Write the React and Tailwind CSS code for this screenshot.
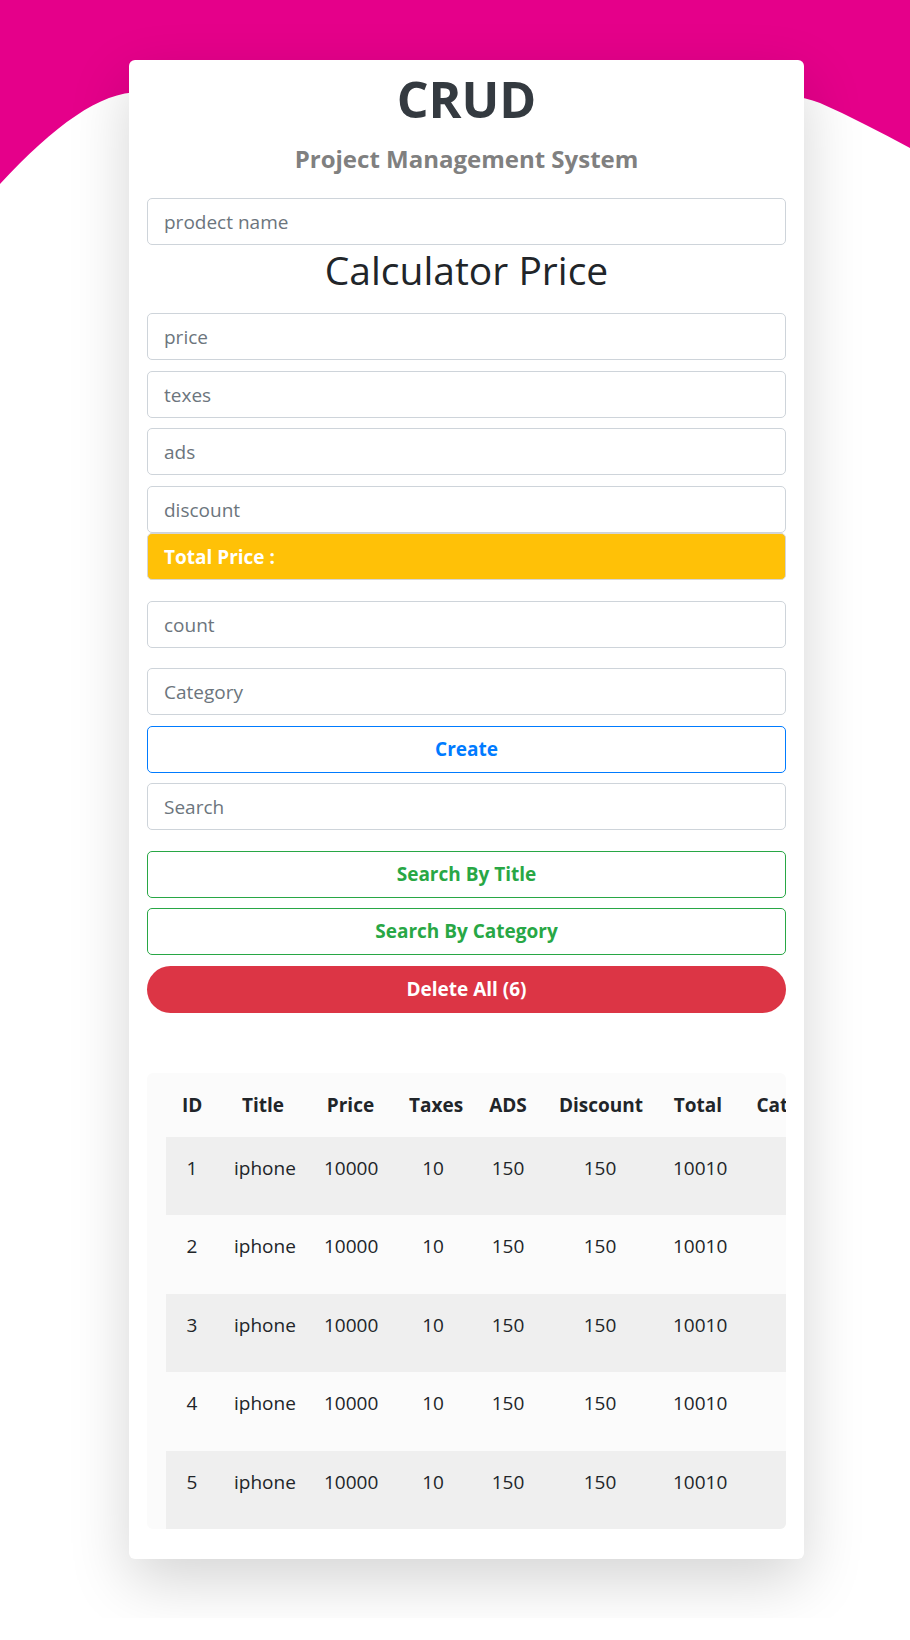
import React from "react";

const rows = [1, 2, 3, 4, 5].map((id) => ({
  id,
  title: "iphone",
  price: 10000,
  taxes: 10,
  ads: 150,
  discount: 150,
  total: 10010,
  category: "",
}));

const inputCls =
  "block w-full h-[47px] rounded-[5px] border border-[#ced4da] bg-white px-4 text-[19px] text-[#495057] placeholder:text-[#6c757d] outline-none";

const Wave = () => (
  <svg
    className="absolute left-0 top-0"
    width="910"
    height="200"
    viewBox="0 0 910 200"
    preserveAspectRatio="none"
  >
    <path
      d="M0,0 H910 V148 C880,132 850,116 820,103 C790,92 760,92 730,92 H140 C100,92 55,125 0,184 Z"
      fill="#e5008a"
    />
  </svg>
);

export default function App() {
  return (
    <div className="relative h-[1618px] overflow-hidden bg-white font-['Open_Sans',sans-serif]">
      <Wave />
      <div className="relative ml-[129px] mt-[60px] w-[675px] rounded-[6px] bg-white px-[18px] pt-[9px] pb-[30px] shadow-[0_22px_60px_rgba(0,0,0,0.17)]">
        <h1 className="text-center text-[50px] font-bold leading-[60px] text-[#343a40]">CRUD</h1>
        <h2 className="mt-[14px] text-center text-[24px] font-bold leading-[32px] text-[#808080]">
          Project Management System
        </h2>

        <input className={inputCls + " mt-[23px] h-[46px]"} placeholder="prodect name" />
        <h3 className="mt-[1px] text-center text-[39px] font-medium leading-[48px] text-[#212529]">
          Calculator Price
        </h3>

        <input className={inputCls + " mt-[19px]"} placeholder="price" />
        <input className={inputCls + " mt-[11px]"} placeholder="texes" />
        <input className={inputCls + " mt-[10px]"} placeholder="ads" />
        <input className={inputCls + " mt-[11px]"} placeholder="discount" />
        <div className="flex h-[47px] items-center rounded-[5px] border border-[#d6d6d6] bg-[#ffc107] px-4 pt-[2px] text-[19px] font-bold text-white">
          Total Price :
        </div>

        <input className={inputCls + " mt-[21px]"} placeholder="count" />
        <input className={inputCls + " mt-[20px]"} placeholder="Category" />
        <button className="mt-[11px] block h-[47px] w-full rounded-[5px] border border-[#007bff] bg-white text-[19px] font-bold text-[#007bff]">
          Create
        </button>
        <input className={inputCls + " mt-[10px]"} placeholder="Search" />
        <button className="mt-[21px] block h-[47px] w-full rounded-[5px] border border-[#28a745] bg-white text-[19px] font-bold text-[#28a745]">
          Search By Title
        </button>
        <button className="mt-[10px] block h-[47px] w-full rounded-[5px] border border-[#28a745] bg-white text-[19px] font-bold text-[#28a745]">
          Search By Category
        </button>
        <button className="mt-[11px] block h-[47px] w-full rounded-full bg-[#dc3545] text-[19px] font-bold text-white">
          Delete All (6)
        </button>

        <div className="mt-[60px] overflow-hidden rounded-[6px] bg-[#fbfbfb] pl-[19px]">
          <table className="w-[1000px] table-fixed border-collapse text-[19px] text-[#212529]">
            <colgroup>
              <col className="w-[52px]" />
              <col className="w-[90px]" />
              <col className="w-[85px]" />
              <col className="w-[80px]" />
              <col className="w-[70px]" />
              <col className="w-[114px]" />
              <col className="w-[82px]" />
              <col className="w-[120px]" />
              <col className="w-[110px]" />
              <col className="w-[197px]" />
            </colgroup>
            <thead>
              <tr>
                {["ID", "Title", "Price", "Taxes", "ADS", "Discount", "Total", "Category", "Update", "Delete"].map((h) => (
                  <th key={h} className="h-[64px] px-4 text-center align-middle font-bold leading-6 whitespace-nowrap">
                    {h}
                  </th>
                ))}
              </tr>
            </thead>
            <tbody>
              {rows.map((r, i) => (
                <tr key={r.id} className={i % 2 === 0 ? "bg-[#efefef]" : ""}>
                  {[r.id, r.title, r.price, r.taxes, r.ads, r.discount, r.total, r.category].map((v, j) => (
                    <td key={j} className="h-[78.4px] px-4 pt-[19px] text-center align-top leading-6 whitespace-nowrap">
                      {v}
                    </td>
                  ))}
                  <td className="h-[78.4px] px-2 pt-[12px] align-top">
                    <button className="rounded-full bg-[#007bff] px-4 py-1 text-[16px] font-bold text-white">update</button>
                  </td>
                  <td className="h-[78.4px] px-2 pt-[12px] align-top">
                    <button className="rounded-full bg-[#dc3545] px-4 py-1 text-[16px] font-bold text-white">delete</button>
                  </td>
                </tr>
              ))}
            </tbody>
          </table>
        </div>
      </div>
    </div>
  );
}
